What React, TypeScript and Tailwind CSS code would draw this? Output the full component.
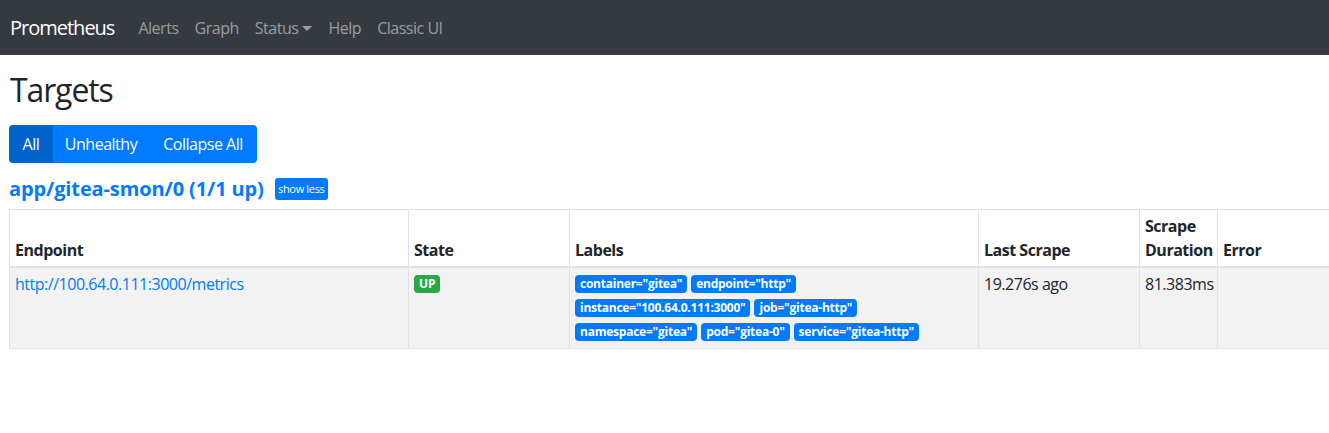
import React from "react";

const labels: string[][] = [
  ['container="gitea"', 'endpoint="http"'],
  ['instance="100.64.0.111:3000"', 'job="gitea-http"'],
  ['namespace="gitea"', 'pod="gitea-0"', 'service="gitea-http"'],
];

const cell = "border border-[#dee2e6] px-[5px] py-[4px]";
const head = "border border-b-2 border-[#dee2e6] px-[5px] py-[4px]";

export default function App() {
  return (
    <div
      className="min-h-[433px] w-[1329px] overflow-hidden bg-white text-[#212529] text-[16px] leading-[24px] tracking-[-0.03em]"
      style={{ fontFamily: '"Open Sans", "Noto Sans", Arial, sans-serif' }}
    >
      <nav className="flex h-[55px] items-center bg-[#343a40] px-[10px]">
        <span className="mr-[16px] text-[20px] leading-[30px] tracking-[-0.05em] text-white">Prometheus</span>
        <div className="flex items-center text-[16px] text-[rgba(255,255,255,0.5)]">
          <span className="px-2">Alerts</span>
          <span className="px-2">Graph</span>
          <span className="flex items-center px-2">
            Status
            <span className="ml-[4px] mt-[1px] inline-block h-0 w-0 border-x-[5px] border-t-[5px] border-x-transparent border-t-[rgba(255,255,255,0.5)]" />
          </span>
          <span className="px-2">Help</span>
          <span className="px-2">Classic UI</span>
        </div>
      </nav>
      <div className="px-[9px] pt-[16px]">
        <h2 className="mb-[16px] pl-[1px] text-[32px] font-normal leading-[38px] tracking-[-0.035em]">Targets</h2>
        <div className="flex">
          <div className="flex overflow-hidden rounded-[4px] text-white">
            <span className="w-[44px] bg-[#0062cc] py-[7px] text-center">All</span>
            <span className="w-[96px] bg-[#007bff] py-[7px] text-center">Unhealthy</span>
            <span className="w-[108px] bg-[#007bff] py-[7px] text-center">Collapse All</span>
          </div>
        </div>
        <div className="mt-[15px] flex h-[22px] items-center">
          <span className="text-[20px] font-bold leading-[22px] tracking-[-0.006em] text-[#007bff]">
            app/gitea-smon/0 (1/1 up)
          </span>
          <span className="ml-[11px] flex h-[22px] w-[53px] items-center justify-center rounded-[3px] bg-[#007bff] text-[11px] tracking-[-0.03em] text-white">
            show less
          </span>
        </div>
        <table className="mt-[9px] w-[1340px] table-fixed border-collapse">
          <colgroup>
            <col className="w-[399px]" />
            <col className="w-[161px]" />
            <col className="w-[409px]" />
            <col className="w-[161px]" />
            <col className="w-[78px]" />
            <col />
          </colgroup>
          <thead>
            <tr className="text-left align-bottom font-bold">
              <th className={head}>Endpoint</th>
              <th className={head}>State</th>
              <th className={head}>Labels</th>
              <th className={head}>Last Scrape</th>
              <th className={head}>Scrape Duration</th>
              <th className={head}>Error</th>
            </tr>
          </thead>
          <tbody>
            <tr className="bg-[#f2f2f2] align-top">
              <td className={cell}>
                <span className="text-[#007bff]">http://100.64.0.111:3000/metrics</span>
              </td>
              <td className={cell}>
                <div className="flex h-[24px] items-center">
                  <span className="inline-block rounded-[4px] bg-[#28a745] px-[5px] py-[3px] text-[12px] font-bold leading-none tracking-[-0.01em] text-white">
                    UP
                  </span>
                </div>
              </td>
              <td className={cell}>
                {labels.map((row, i) => (
                  <div key={i} className="flex h-[24px] items-center gap-[4px]">
                    {row.map((l) => (
                      <span
                        key={l}
                        className="inline-block rounded-[4px] bg-[#007bff] px-[5px] py-[3px] text-[12px] font-bold leading-none tracking-[-0.02em] text-white"
                      >
                        {l}
                      </span>
                    ))}
                  </div>
                ))}
              </td>
              <td className={cell}>19.276s ago</td>
              <td className={cell}>81.383ms</td>
              <td className={cell}></td>
            </tr>
          </tbody>
        </table>
      </div>
    </div>
  );
}
